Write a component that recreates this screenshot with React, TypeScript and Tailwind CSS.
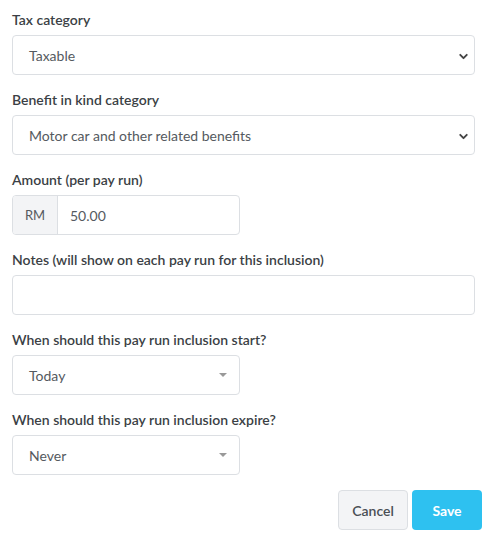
import { ChevronDown } from 'lucide-react';

const font = { fontFamily: '"Lato", "Open Sans", Arial, sans-serif' };

function Label({ children }: { children: React.ReactNode }) {
  return (
    <div className="h-5 mb-[5px] text-[14px] leading-5 font-semibold text-[#3b3f45]">{children}</div>
  );
}

function NativeSelect({ value }: { value: string }) {
  return (
    <div className="relative h-10 w-[463px] rounded border border-[#dcdfe3] bg-white flex items-center pl-[16px] pt-[1px] text-[14px] text-[#555a60]">
      <span>{value}</span>
      <ChevronDown className="absolute right-[4px] top-[14px] w-[13px] h-[13px] text-[#444]" strokeWidth={3.5} />
    </div>
  );
}

function DropSelect({ value }: { value: string }) {
  return (
    <div className="relative h-10 w-[228px] rounded border border-[#dcdfe3] bg-white flex items-center pl-[16px] pt-[1px] text-[14px] text-[#555a60]">
      <span>{value}</span>
      <span className="absolute right-[12px] top-[17px] w-0 h-0 border-l-[4px] border-r-[4px] border-t-[4px] border-l-transparent border-r-transparent border-t-[#999]" />
    </div>
  );
}

export default function App() {
  return (
    <div className="bg-white w-[489px] h-[535px] pt-[10px] pl-[12px]" style={font}>
      <Label>Tax category</Label>
      <div className="mb-[15px]">
        <NativeSelect value="Taxable" />
      </div>

      <Label>Benefit in kind category</Label>
      <div className="mb-[15px]">
        <NativeSelect value="Motor car and other related benefits" />
      </div>

      <Label>Amount (per pay run)</Label>
      <div className="mb-[15px] flex h-10 w-[228px] rounded border border-[#dcdfe3] overflow-hidden text-[14px]">
        <div className="w-[45px] bg-[#f3f4f6] border-r border-[#dcdfe3] flex items-center justify-center pt-[1px] text-[13px] text-[#555a60]">
          RM
        </div>
        <div className="flex-1 flex items-center pl-[12px] pt-[1px] text-[#555a60]">50.00</div>
      </div>

      <Label>Notes (will show on each pay run for this inclusion)</Label>
      <div className="mb-[15px] h-10 w-[463px] rounded border border-[#dcdfe3] bg-white" />

      <Label>When should this pay run inclusion start?</Label>
      <div className="mb-[15px]">
        <DropSelect value="Today" />
      </div>

      <Label>When should this pay run inclusion expire?</Label>
      <div>
        <DropSelect value="Never" />
      </div>

      <div className="flex justify-end gap-[4px] mt-[15px] pr-[7px]">
        <button className="h-10 w-[70px] rounded border border-[#dcdfe3] bg-[#f3f4f6] text-[14px] font-semibold text-[#4a4f55]">
          Cancel
        </button>
        <button className="h-10 w-[70px] rounded bg-[#2ec1f0] text-[14px] font-bold text-white">
          Save
        </button>
      </div>
    </div>
  );
}
